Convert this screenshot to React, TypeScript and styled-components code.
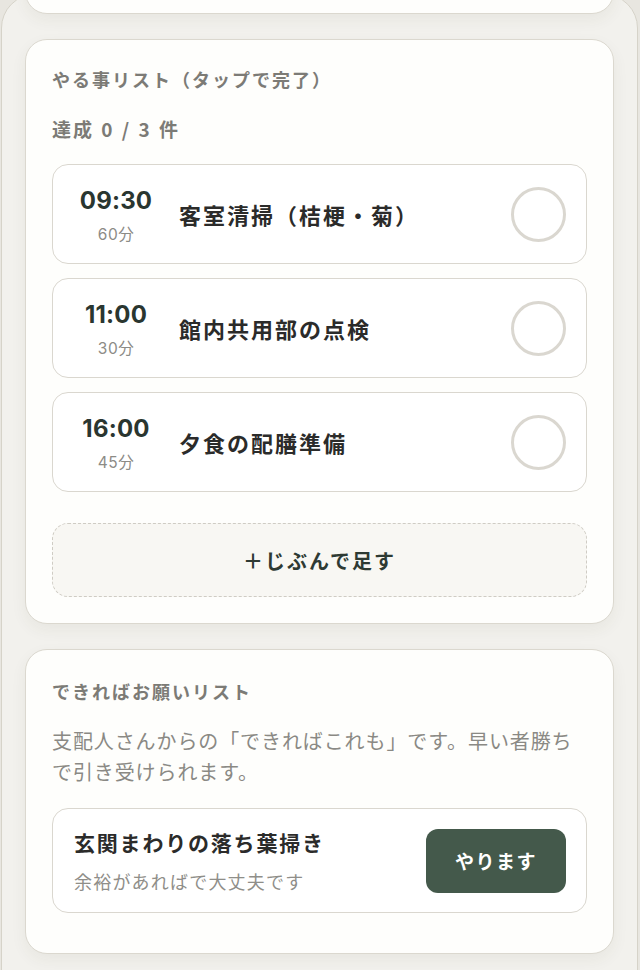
import React from "react";
import styled, { createGlobalStyle } from "styled-components";

const Global = createGlobalStyle`
  html, body { margin: 0; padding: 0; background: #e8e6e0; }
  body { font-family: "Noto Sans CJK JP", "Noto Sans", sans-serif; overflow: hidden; }
  #root { padding-left: 1px; }
`;

const Frame = styled.div`
  box-sizing: border-box;
  width: 637px;
  margin-top: -6px;
  min-height: 1000px;
  border: 1.5px solid #d6d3c9;
  border-radius: 34px 34px 0 0;
  background: #f2f1ed;
  padding: 0 23px;
  overflow: hidden;
  display: flex;
  flex-direction: column;
  gap: 25px;
`;

const Card = styled.section<{ $pt?: number; $pb?: number }>`
  box-sizing: border-box;
  background: #fefefc;
  border: 1px solid #dbd8cf;
  border-radius: 22px;
  padding: ${(p) => p.$pt ?? 26}px 26px ${(p) => p.$pb ?? 26}px;
  box-shadow: 0 6px 16px rgba(70, 60, 30, 0.06);
  display: flex;
  flex-direction: column;
`;

const HiddenCard = styled(Card)`
  height: 80px;
  margin-top: -61px;
  flex-shrink: 0;
`;

const SectionTitle = styled.h2`
  margin: 0;
  font-size: 18px;
  line-height: 26px;
  font-weight: 700;
  letter-spacing: 2px;
  color: #7c7b76;
`;

const Count = styled.div`
  margin-top: 24px;
  font-size: 19px;
  line-height: 26px;
  font-weight: 700;
  letter-spacing: 2px;
  color: #7c7b76;
  word-spacing: 1px;
`;

const TaskList = styled.div`
  margin-top: 22px;
  display: flex;
  flex-direction: column;
  gap: 14px;
`;

const TaskItem = styled.button`
  box-sizing: border-box;
  height: 100px;
  display: flex;
  align-items: center;
  padding: 0 20px 0 22px;
  background: #fff;
  border: 1.5px solid #dad7cf;
  border-radius: 16px;
  font-family: inherit;
  text-align: left;
  cursor: pointer;
`;

const TimeCol = styled.div`
  width: 82px;
  padding-top: 3px;
  display: flex;
  flex-direction: column;
  align-items: center;
  flex-shrink: 0;
`;

const Time = styled.div`
  font-family: "Inter", "Liberation Sans", sans-serif;
  font-size: 24px;
  line-height: 28px;
  font-weight: 700;
  color: #2a3630;
  letter-spacing: 0.2px;
`;

const Duration = styled.div`
  margin-top: 10px;
  font-family: "Inter", "Noto Sans CJK JP", sans-serif;
  font-size: 15.5px;
  line-height: 20px;
  color: #8c8b86;
  letter-spacing: 0.5px;
`;

const TaskTitle = styled.div`
  flex: 1;
  margin-left: 22px;
  font-size: 22px;
  line-height: 30px;
  font-weight: 700;
  letter-spacing: 2px;
  color: #2b2b2a;
`;

const Check = styled.span`
  box-sizing: border-box;
  width: 55px;
  height: 55px;
  border-radius: 50%;
  border: 3px solid #dad7d0;
  flex-shrink: 0;
`;

const AddButton = styled.button`
  box-sizing: border-box;
  margin-top: 31px;
  height: 74px;
  width: 100%;
  background: #f8f7f3;
  border: 1.5px dashed #cfccc4;
  border-radius: 16px;
  font-family: inherit;
  font-size: 20px;
  font-weight: 700;
  letter-spacing: 2px;
  color: #2e3a33;
  cursor: pointer;
`;

const Description = styled.p`
  margin: 21px 0 0;
  font-size: 20px;
  line-height: 31px;
  letter-spacing: 0.9px;
  color: #8a8984;
`;

const RequestItem = styled.div`
  box-sizing: border-box;
  margin-top: 21px;
  display: flex;
  align-items: center;
  padding: 18px 20px 18px 21px;
  border: 1.5px solid #dad7cf;
  border-radius: 16px;
  background: #fff;
`;

const RequestText = styled.div`
  flex: 1;
  display: flex;
  flex-direction: column;
`;

const RequestTitle = styled.div`
  font-size: 21px;
  line-height: 30px;
  font-weight: 700;
  letter-spacing: 1.8px;
  color: #2b2b2a;
`;

const RequestSub = styled.div`
  margin-top: 11px;
  font-size: 18px;
  line-height: 26px;
  letter-spacing: 1.2px;
  color: #8f8e89;
`;

const AcceptButton = styled.button`
  width: 140px;
  height: 64px;
  border: none;
  border-radius: 12px;
  background: #44594b;
  color: #fff;
  font-family: inherit;
  font-size: 19px;
  font-weight: 700;
  letter-spacing: 1.5px;
  cursor: pointer;
  flex-shrink: 0;
`;

const tasks = [
  { time: "09:30", dur: "60分", title: "客室清掃（桔梗・菊）" },
  { time: "11:00", dur: "30分", title: "館内共用部の点検" },
  { time: "16:00", dur: "45分", title: "夕食の配膳準備" },
];

export default function App() {
  return (
    <>
      <Global />
      <Frame>
        <HiddenCard />
        <Card>
          <SectionTitle>やる事リスト（タップで完了）</SectionTitle>
          <Count>達成 0 / 3 件</Count>
          <TaskList>
            {tasks.map((t) => (
              <TaskItem key={t.time}>
                <TimeCol>
                  <Time>{t.time}</Time>
                  <Duration>{t.dur}</Duration>
                </TimeCol>
                <TaskTitle>{t.title}</TaskTitle>
                <Check />
              </TaskItem>
            ))}
          </TaskList>
          <AddButton>＋じぶんで足す</AddButton>
        </Card>
        <Card $pt={28} $pb={40}>
          <SectionTitle>できればお願いリスト</SectionTitle>
          <Description>
            支配人さんからの「できればこれも」です。早い者勝ちで引き受けられます。
          </Description>
          <RequestItem>
            <RequestText>
              <RequestTitle>玄関まわりの落ち葉掃き</RequestTitle>
              <RequestSub>余裕があればで大丈夫です</RequestSub>
            </RequestText>
            <AcceptButton>やります</AcceptButton>
          </RequestItem>
        </Card>
      </Frame>
    </>
  );
}
